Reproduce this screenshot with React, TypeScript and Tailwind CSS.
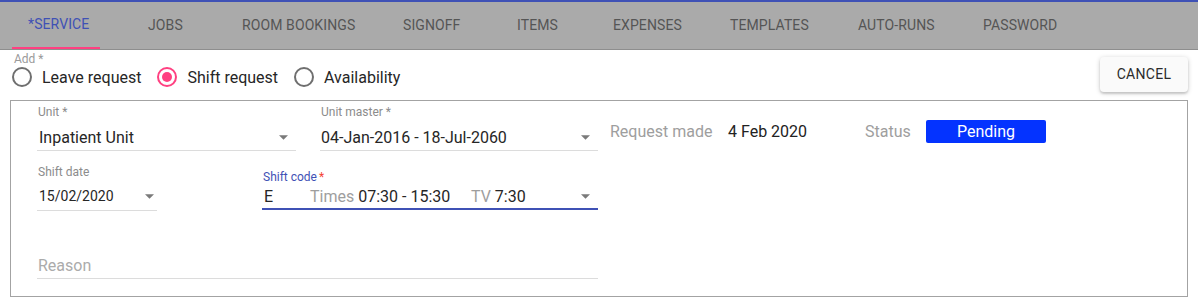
import React from "react";

const tabs = [
  { label: "JOBS", w: "w-[94px]" },
  { label: "ROOM BOOKINGS", w: "w-[161px]" },
  { label: "SIGNOFF", w: "w-[114px]" },
  { label: "ITEMS", w: "w-[96px]" },
  { label: "EXPENSES", w: "w-[117px]" },
  { label: "TEMPLATES", w: "w-[128px]" },
  { label: "AUTO-RUNS", w: "w-[125px]" },
  { label: "PASSWORD", w: "w-[120px]" },
];

function Arrow({ className = "" }: { className?: string }) {
  return (
    <svg viewBox="7 10 10 5" className={`w-[9px] h-[5px] shrink-0 ${className}`}>
      <path d="M7 10l5 5 5-5z" fill="#7a7a7a" />
    </svg>
  );
}

function Radio({ checked, label }: { checked?: boolean; label: string }) {
  return (
    <div className="flex items-center">
      <div
        className={`w-[20px] h-[20px] rounded-full border-2 flex items-center justify-center ${
          checked ? "border-[#ff4081]" : "border-[#6f6f6f]"
        }`}
      >
        {checked && <div className="w-[10px] h-[10px] rounded-full bg-[#ff4081]" />}
      </div>
      <span className="ml-[10px] text-[16px] leading-[19px] text-[#262626]">{label}</span>
    </div>
  );
}

export default function App() {
  return (
    <div className="w-[1198px] h-[301px] bg-white font-['Roboto',sans-serif]">
      {/* Tab bar */}
      <div className="h-[50px] border-t-2 border-[#3f51b5] bg-[#aaaaaa] border-b border-b-[#8e8e8e] flex pl-[12px]">
        <div className="w-[88px] h-[47px] border-b-2 border-[#ff4081] flex items-center pl-[16px] text-[14px] tracking-[0.1px] text-[#3f51b5]">
          *SERVICE
        </div>
        <div className="flex ml-[48px]">
          {tabs.map((t) => (
            <div
              key={t.label}
              className={`${t.w} h-[47px] flex items-center text-[14px] tracking-[0.1px] text-[#555555] whitespace-nowrap`}
            >
              {t.label}
            </div>
          ))}
        </div>
      </div>

      {/* Add row */}
      <div className="h-[50px] flex justify-between">
        <div className="pl-[12px]">
          <div className="ml-[2px] mt-[2px] text-[12px] leading-[14px] text-[#9a9a9a]">Add *</div>
          <div className="h-[22px] flex items-center gap-[16px]">
            <Radio label="Leave request" />
            <Radio checked label="Shift request" />
            <Radio label="Availability" />
          </div>
        </div>
        <button className="mt-[7px] mr-[10px] w-[88px] h-[35px] rounded-[4px] bg-[#fafafa] shadow-[0_1px_5px_rgba(0,0,0,0.2),0_2px_2px_rgba(0,0,0,0.12)] text-[14px] tracking-[0.3px] text-[#2b2b2b]">
          CANCEL
        </button>
      </div>

      {/* Panel */}
      <div className="mx-[10px] h-[197px] border border-[#a3a3a3] pl-[26px] pt-[4px]">
        <div className="flex items-start">
          <div className="w-[259px]">
            <div className="h-[14px] pl-[1px] text-[12px] leading-[14px] text-[#8c8c8c]">Unit *</div>
            <div className="h-[32px] pt-[5px] pl-[2px] border-b border-[#dcdcdc] flex items-center justify-between">
              <span className="text-[16px] leading-[19px] text-[#262626]">Inpatient Unit</span>
              <Arrow className="mr-[8px]" />
            </div>
          </div>
          <div className="ml-[24px] w-[278px]">
            <div className="h-[14px] pl-[1px] text-[12px] leading-[14px] text-[#8c8c8c]">Unit master *</div>
            <div className="h-[32px] pt-[5px] pl-[1px] border-b border-[#dcdcdc] flex items-center justify-between">
              <span className="text-[16px] leading-[19px] text-[#262626]">04-Jan-2016 - 18-Jul-2060</span>
              <Arrow className="mr-[8px]" />
            </div>
          </div>
          <div className="ml-[12px] mt-[15px] h-[23px] flex items-center text-[16px] leading-[19px]">
            <span className="w-[118px] text-[#9e9e9e]">Request made</span>
            <span className="w-[137px] text-[#222222]">4 Feb 2020</span>
            <span className="w-[61px] text-[#9e9e9e]">Status</span>
            <span className="w-[120px] h-[23px] rounded-[2px] bg-[#0433ff] text-white flex items-center justify-center">
              Pending
            </span>
          </div>
        </div>

        <div className="mt-[14px] flex items-start">
          <div className="w-[120px]">
            <div className="h-[14px] pl-[1px] text-[12px] leading-[14px] text-[#8c8c8c]">Shift date</div>
            <div className="h-[32px] pt-[3px] pl-[2px] border-b border-[#dcdcdc] flex items-center justify-between">
              <span className="text-[14px] leading-[17px] text-[#262626]">15/02/2020</span>
              <Arrow className="mr-[3px]" />
            </div>
          </div>
          <div className="ml-[105px] mt-[5px] w-[336px]">
            <div className="h-[14px] pl-[1px] text-[12px] leading-[14px] text-[#3f51b5]">
              Shift code<span className="ml-[2px] text-[#f44336]">*</span>
            </div>
            <div className="h-[26px] border-b-2 border-[#3f51b5] flex items-center text-[16px] leading-[19px]">
              <span className="w-[48px] pl-[2px] text-[#262626]">E</span>
              <span className="w-[161px] whitespace-nowrap">
                <span className="text-[#9e9e9e]">Times </span>
                <span className="text-[#262626]">07:30 - 15:30</span>
              </span>
              <span className="whitespace-nowrap">
                <span className="text-[#9e9e9e]">TV </span>
                <span className="text-[#262626]">7:30</span>
              </span>
              <Arrow className="ml-auto mr-[8px]" />
            </div>
          </div>
        </div>

        <div className="mt-[38px] w-[561px]">
          <div className="h-[30px] pt-[3px] pl-[1px] border-b border-[#dcdcdc] flex items-center">
            <span className="text-[16px] leading-[19px] text-[#ababab]">Reason</span>
          </div>
        </div>
      </div>
    </div>
  );
}
